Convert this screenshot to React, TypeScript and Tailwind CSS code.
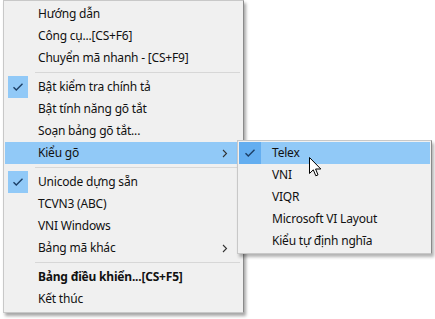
import React from 'react';

type Item =
  | { kind: 'sep' }
  | { kind: 'item'; label: string; checked?: boolean; sub?: boolean; active?: boolean; bold?: boolean };

const mainItems: Item[] = [
  { kind: 'item', label: 'Hướng dẫn' },
  { kind: 'item', label: 'Công cụ...[CS+F6]' },
  { kind: 'item', label: 'Chuyển mã nhanh - [CS+F9]' },
  { kind: 'sep' },
  { kind: 'item', label: 'Bật kiểm tra chính tả', checked: true },
  { kind: 'item', label: 'Bật tính năng gõ tắt' },
  { kind: 'item', label: 'Soạn bảng gõ tắt...' },
  { kind: 'item', label: 'Kiểu gõ', sub: true, active: true },
  { kind: 'sep' },
  { kind: 'item', label: 'Unicode dựng sẵn', checked: true },
  { kind: 'item', label: 'TCVN3 (ABC)' },
  { kind: 'item', label: 'VNI Windows' },
  { kind: 'item', label: 'Bảng mã khác', sub: true },
  { kind: 'sep' },
  { kind: 'item', label: 'Bảng điều khiển...[CS+F5]', bold: true },
  { kind: 'item', label: 'Kết thúc' },
];

const subItems = ['Telex', 'VNI', 'VIQR', 'Microsoft VI Layout', 'Kiểu tự định nghĩa'];

const Check = () => (
  <svg width="12" height="10" viewBox="0 0 12 10">
    <path d="M1.5 5.2 L4.3 8 L10.5 1.8" fill="none" stroke="#1c3f66" strokeWidth={1.4} />
  </svg>
);

const Chevron = () => (
  <svg width="6" height="9" viewBox="0 0 6 9">
    <path d="M1 1 L4.5 4.5 L1 8" fill="none" stroke="#333" strokeWidth={1.1} />
  </svg>
);

const Cursor = () => (
  <svg width="13" height="21" viewBox="0 0 13 21">
    <path
      d="M0.5 0.5 L0.5 16.5 L4.3 12.8 L6.8 18.8 L9 17.9 L6.6 12 L11.8 12 Z"
      fill="#fff"
      stroke="#000"
      strokeWidth={1}
      strokeLinejoin="miter"
    />
  </svg>
);

const App: React.FC = () => {
  return (
    <div
      className="relative w-[435px] h-[319px] overflow-hidden bg-white text-[12px] tracking-[-0.2px] text-[#111]"
      style={{ fontFamily: '"Noto Sans", "Liberation Sans", sans-serif' }}
    >
      {/* Main context menu */}
      <div className="ml-[3px] w-[241px] border border-[#c8c8c8] border-r-[#8a8a8a] bg-[#f0f0f0] pt-[2px] pb-[2px] pl-[1px] pr-[1px] shadow-[2px_3px_3px_rgba(0,0,0,0.35)]">
        {mainItems.map((item, i) =>
          item.kind === 'sep' ? (
            <div key={i} className="h-[7px] flex items-center pl-[30px] pr-[2px]">
              <div className="h-px w-full bg-[#d7d7d7]" />
            </div>
          ) : (
            <div
              key={i}
              className={`h-[22px] flex items-center ${item.active ? 'bg-[#91c9f7]' : ''}`}
            >
              <div className="w-[33px] h-[22px] flex items-center pl-[3px]">
                {item.checked && (
                  <div className="w-[20px] h-[22px] bg-[#91c9f7] flex items-center justify-center">
                    <Check />
                  </div>
                )}
              </div>
              <span className={`flex-1 whitespace-nowrap ${item.bold ? 'font-bold' : ''}`}>{item.label}</span>
              {item.sub && (
                <div className="w-[20px] flex items-center justify-start">
                  <Chevron />
                </div>
              )}
            </div>
          )
        )}
      </div>

      {/* Submenu: Kiểu gõ */}
      <div className="absolute left-[237px] top-[140px] w-[195px] border border-[#c8c8c8] border-r-[#8a8a8a] bg-[#f0f0f0] py-[1px] px-[1px] shadow-[2px_3px_3px_rgba(0,0,0,0.3)]">
        {subItems.map((label, i) => (
          <div key={label} className={`h-[22px] flex items-center ${i === 0 ? 'bg-[#91c9f7]' : ''}`}>
            <div className="w-[33px] h-[22px] flex items-center">
              {i === 0 && (
                <div className="w-[22px] h-[22px] bg-[#64aef0] flex items-center justify-center">
                  <Check />
                </div>
              )}
            </div>
            <span className="whitespace-nowrap">{label}</span>
          </div>
        ))}
      </div>

      {/* Mouse pointer */}
      <div className="absolute left-[309px] top-[157px]">
        <Cursor />
      </div>
    </div>
  );
};

export default App;
